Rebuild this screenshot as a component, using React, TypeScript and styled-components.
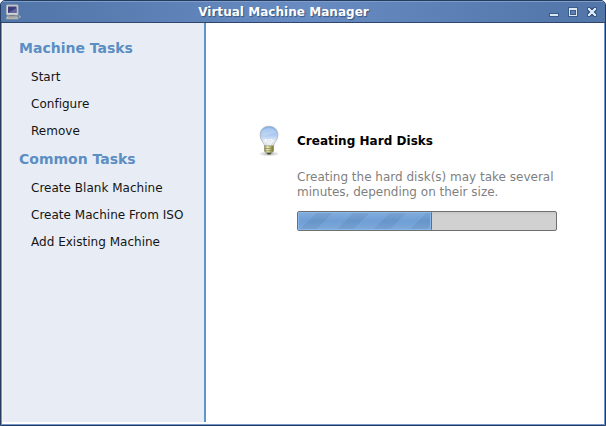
import React from "react";
import styled, { createGlobalStyle } from "styled-components";

const GlobalStyle = createGlobalStyle`
  body { margin: 0; background: #fff; font-family: "DejaVu Sans", sans-serif; font-size: 12px; }
  svg { display: block; }
`;

const Window = styled.div`
  box-sizing: border-box;
  width: 606px;
  height: 426px;
  display: flex;
  flex-direction: column;
  border: 1px solid #243c62;
  border-radius: 5px 5px 0 0;
  background: #7396cb;
  overflow: hidden;
`;

const TitleBar = styled.header`
  box-sizing: border-box;
  height: 22px;
  flex: none;
  display: grid;
  grid-template-columns: 80px 1fr 80px;
  align-items: center;
  border-top: 1px solid #809dc8;
  border-bottom: 1px solid #2c466d;
  background: linear-gradient(90deg, #5276a8 0%, #5579ad 10%, #688cc2 50%, #5579ad 90%, #5276a8 100%);
`;

const AppIcon = styled.span`
  padding-left: 3px;
`;

const Title = styled.h1`
  margin: 0;
  padding-right: 39px;
  font-size: 12px;
  line-height: 20px;
  font-weight: bold;
  text-align: center;
  white-space: nowrap;
  letter-spacing: 0.04px;
  color: #fff;
  text-shadow: 1px 1px 1px #35547f;
`;

const Controls = styled.div`
  display: flex;
  justify-content: flex-end;
  gap: 7px;
  padding: 0 7px 2px 0;
`;

const Body = styled.div`
  flex: 1;
  display: flex;
  margin: 0 1px 1px;
  border-left: 1px solid #f7f3ee;
  background: #fff;
`;

const Sidebar = styled.nav`
  box-sizing: border-box;
  width: 203px;
  height: 399px;
  padding: 15px 0 0 16px;
  border-right: 2px solid #5e96c8;
  background: #e8edf5;
`;

const TaskHeading = styled.h2`
  margin: 0;
  height: 26px;
  line-height: 20px;
  font-size: 14px;
  font-weight: bold;
  color: #5b8ec3;
`;

const TaskList = styled.ul`
  margin: 0;
  padding: 0 0 4px 12px;
  list-style: none;
`;

const Task = styled.li`
  height: 27px;
  line-height: 27px;
  color: #141414;
  white-space: nowrap;
  letter-spacing: 0.02px;
`;

const Main = styled.main`
  flex: 1;
  display: flex;
  align-items: flex-start;
  padding: 102px 0 0 50px;
`;

const Status = styled.section`
  width: 260px;
  padding: 8px 0 0 15px;
`;

const StatusTitle = styled.h3`
  margin: 0;
  font-size: 12px;
  line-height: 16px;
  font-weight: bold;
  letter-spacing: 0.04px;
  color: #000;
`;

const Description = styled.p`
  margin: 21px 0 11px;
  line-height: 15px;
  color: #7f7f7f;
  white-space: nowrap;
`;

const Track = styled.div`
  box-sizing: border-box;
  height: 20px;
  display: flex;
  border: 1px solid #6d706e;
  border-radius: 2px;
  background: linear-gradient(#c8c8c8, #d1d1d1 3px);
  overflow: hidden;
`;

const Fill = styled.div`
  box-sizing: border-box;
  width: 134px;
  border: 1px solid #88b8eb;
  border-right-color: #4d7299;
  box-shadow: inset -1px 0 #88b8eb;
  background:
    linear-gradient(rgba(255, 255, 255, 0.12), rgba(255, 255, 255, 0) 50%, rgba(255, 255, 255, 0.1)),
    repeating-linear-gradient(135deg, #6f9fd6 0 12px, #6795ca 12.5px 23.5px, #6f9fd6 24px 26px);
`;

const MachineIcon = () => (
  <svg width="18" height="18" viewBox="0 0 18 18">
    <rect x="2.5" y="2" width="11.5" height="10" rx=".7" fill="#d5d7d6" stroke="#adb2b8" />
    <rect x="4" y="3.5" width="8.5" height="6.5" fill="#3d3d7d" />
    <path d="M4 10 12.5 5v5z" fill="#64679c" />
    <path d="M5.5 12h5v2h-5z" fill="#777c80" />
    <path d="m3 13.5 10-.2 1.5 2.7H2z" fill="#c8c9c5" stroke="#999d9d" strokeWidth=".8" />
    <path d="M4 14.5h8.5" stroke="#95989a" strokeWidth=".7" />
    <path d="M13 12.5h2" stroke="#8c9191" />
    <ellipse cx="15.7" cy="13.7" rx="1" ry="1.2" fill="#abadac" />
  </svg>
);

const BulbIcon = () => (
  <svg width="26" height="32" viewBox="0 0 26 32">
    <defs>
      <linearGradient id="glass" x1="0" y1="0" x2="0" y2="1">
        <stop offset="0" stopColor="#80afe8" />
        <stop offset=".45" stopColor="#b0ccf1" />
        <stop offset=".8" stopColor="#edf1f6" />
        <stop offset="1" stopColor="#e5e8ea" />
      </linearGradient>
      <linearGradient id="socket">
        <stop offset="0" stopColor="#98965a" />
        <stop offset=".35" stopColor="#f2f0bc" />
        <stop offset="1" stopColor="#77742f" />
      </linearGradient>
      <radialGradient id="shade">
        <stop offset="0" stopColor="#555" stopOpacity=".55" />
        <stop offset="1" stopColor="#777" stopOpacity="0" />
      </radialGradient>
    </defs>
    <ellipse cx="13" cy="28.8" rx="11" ry="2.6" fill="url(#shade)" />
    <path d="M8.7 21.3c-.2-3.3-4.6-6-4.6-11.3 0-5.5 4-8.7 8.9-8.7s8.9 3.2 8.9 8.7c0 5.3-4.4 8-4.6 11.3z" fill="url(#glass)" stroke="#a9b0bd" strokeWidth=".8" />
    <path d="M5.4 10c0-4.1 3-6.9 7.4-6.9 4 0 6.3 2 7.3 4.7C15.5 7.5 12 12 5.4 10z" fill="#fff" opacity=".22" />
    <path d="M11.3 21 9 14l2 1.5 1.3-1.3 1.3 1.3 1.3-1.3L16.5 15 14.5 21" fill="none" stroke="#fff" strokeWidth=".9" />
    <path d="M10.5 20.5 9.7 17M15.5 20.5l1-3.5" stroke="#bbc4cd" strokeWidth=".6" />
    <path d="M8.5 20.8h9v5.4l-2 1.8h-5l-2-1.8z" fill="url(#socket)" stroke="#8c8964" strokeWidth=".6" />
    <path d="m8.5 23.7 9-.6m-9 2.9 9-.6" stroke="#77743b" strokeWidth=".6" />
    <path d="M10.5 27.7h5l-1.2 1.7h-2.6z" fill="#4a483e" />
  </svg>
);

const MinimizeIcon = () => (
  <svg width="12" height="14" viewBox="0 0 12 14" shapeRendering="crispEdges">
    <path d="M1 9h10v4H1z" fill="#3b5c8b" />
    <path d="M2 10h8v2H2z" fill="#dce7f4" />
  </svg>
);

const MaximizeIcon = () => (
  <svg width="12" height="14" viewBox="0 0 12 14" shapeRendering="crispEdges">
    <path d="M1 3h10v10H1z" fill="#3b5c8b" />
    <path d="M2 4h8v8H2z" fill="#dce7f4" />
    <path d="M3 6h6v5H3z" fill="#3b5c8b" />
    <path d="M4 7h4v3H4z" fill="#5b7eb0" />
  </svg>
);

const CloseIcon = () => (
  <svg width="12" height="14" viewBox="0 0 12 14" shapeRendering="crispEdges">
    <path d="M1 3h4v1h2V3h4v4h-1v2h1v4H7v-1H5v1H1V9h1V7H1z" fill="#3b5c8b" />
    <path d="M2 4h2v1h1v1h2V5h1V4h2v2H9v1H8v2h1v1h1v2H8v-1H7v-1H5v1H4v1H2v-2h1V9h1V7H3V6H2z" fill="#dce7f4" />
  </svg>
);

const groups = [
  { heading: "Machine Tasks", tasks: ["Start", "Configure", "Remove"] },
  { heading: "Common Tasks", tasks: ["Create Blank Machine", "Create Machine From ISO", "Add Existing Machine"] },
];

export default function App() {
  return (
    <>
      <GlobalStyle />
      <Window>
        <TitleBar>
          <AppIcon><MachineIcon /></AppIcon>
          <Title>Virtual Machine Manager</Title>
          <Controls><MinimizeIcon /><MaximizeIcon /><CloseIcon /></Controls>
        </TitleBar>
        <Body>
          <Sidebar>
            {groups.map(({ heading, tasks }) => (
              <React.Fragment key={heading}>
                <TaskHeading>{heading}</TaskHeading>
                <TaskList>{tasks.map((task) => <Task key={task}>{task}</Task>)}</TaskList>
              </React.Fragment>
            ))}
          </Sidebar>
          <Main>
            <BulbIcon />
            <Status>
              <StatusTitle>Creating Hard Disks</StatusTitle>
              <Description>Creating the hard disk(s) may take several<br />minutes, depending on their size.</Description>
              <Track><Fill /></Track>
            </Status>
          </Main>
        </Body>
      </Window>
    </>
  );
}
